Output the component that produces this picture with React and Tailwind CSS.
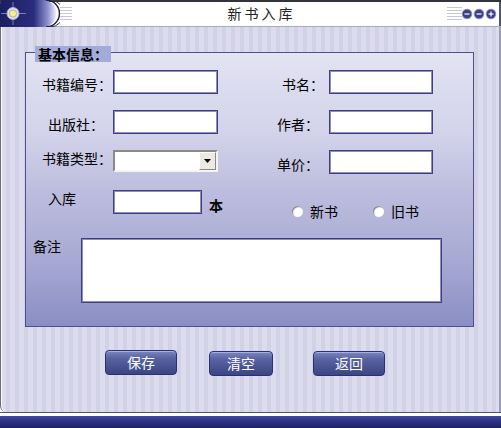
import React, { useState } from "react";

const TitleCap = () => (
  <svg width="60" height="27" viewBox="0 0 60 27" className="shrink-0">
    <defs>
      <linearGradient id="capFill" x1="0" x2="1" y1="0" y2="0">
        <stop offset="0" stopColor="#1b1e5e" />
        <stop offset="0.6" stopColor="#2a2d7e" />
        <stop offset="0.85" stopColor="#9093d2" />
        <stop offset="1" stopColor="#f3f3fc" />
      </linearGradient>
    </defs>
    <path d="M0 4 A4 4 0 0 1 4 0 H43 A13.5 13.5 0 0 1 43 27 H0 Z" fill="url(#capFill)" />
    <path d="M46 0 A13.5 13.5 0 0 1 46 27" stroke="#1f1f2e" strokeWidth="1.5" fill="none" />
    <path d="M50 0 A13.5 13.5 0 0 1 50 27" stroke="#3a3a4e" strokeWidth="1" fill="none" />
    <line x1="1" y1="13.5" x2="26" y2="13.5" stroke="#8f93d0" strokeWidth="0.8" />
    <line x1="13" y1="2" x2="13" y2="25" stroke="#8f93d0" strokeWidth="0.8" />
    <circle cx="13" cy="13.5" r="6" fill="#dfe2f6" stroke="#a8acdc" strokeWidth="1" />
    <circle cx="13" cy="13.5" r="3.6" fill="#f1ef9c" stroke="#b5aa4c" strokeWidth="0.8" />
  </svg>
);

const WinButtons = () => (
  <svg width="36" height="14" viewBox="0 0 36 14" className="shrink-0">
    {[5, 17, 29].map((cx, i) => (
      <g key={cx}>
        <circle cx={cx} cy="7" r="4.8" fill="#3b3f86" stroke="#8c90c4" strokeWidth="1" />
        <line x1={cx - 2.5} y1="7" x2={cx + 2.5} y2="7" stroke="#fff" strokeWidth="1.2" />
        {i === 2 && <line x1={cx} y1="4.5" x2={cx} y2="9.5" stroke="#fff" strokeWidth="1.2" />}
      </g>
    ))}
  </svg>
);

const TextBox = ({ w, value, onChange }) => (
  <input
    type="text"
    value={value}
    onChange={onChange}
    className={`${w} h-[24px] bg-white border border-[#3f3f80] shadow-[inset_0_0_0_1px_#8d8dc0] px-1 text-[13px] outline-none`}
  />
);

const Radio = ({ checked, onClick, label }) => (
  <button type="button" onClick={onClick} className="flex items-center">
    <span className="w-[11px] h-[11px] rounded-full bg-white shadow-[inset_1px_1px_1px_#7d7d8c] flex items-center justify-center">
      {checked && <span className="w-[5px] h-[5px] rounded-full bg-black" />}
    </span>
    <span className="ml-[7px] text-[14px] leading-[16px]">{label}</span>
  </button>
);

const GelButton = ({ w, children }) => (
  <button
    type="button"
    className={`${w} h-[25px] rounded-[4px] border border-[#2b3070] bg-[linear-gradient(180deg,#7c86c0_0%,#5a64a3_30%,#4a5492_65%,#3b4582_100%)] shadow-[inset_0_1px_0_#a9b0dc] text-white text-[14px] leading-[23px]`}
  >
    {children}
  </button>
);

export default function App() {
  const [form, setForm] = useState({
    bookNo: "",
    name: "",
    press: "",
    author: "",
    price: "",
    stock: "",
    note: "",
    isNew: null,
  });

  const set = (key) => (e) => setForm({ ...form, [key]: e.target.value });

  return (
    <div className="w-[501px] h-[428px] flex flex-col overflow-hidden bg-white text-black font-['Noto_Sans_CJK_SC','Liberation_Sans',sans-serif]">
      {/* title bar */}
      <div className="h-[27px] flex items-center bg-white shadow-[inset_0_2px_0_#34343f,inset_0_-1px_0_#a9a9bf,inset_-2px_0_0_#55556a]">
        <TitleCap />
        <div className="w-[12px] h-[13px] bg-[repeating-linear-gradient(180deg,#c6c8da_0px,#c6c8da_1px,transparent_1px,transparent_3px)]" />
        <div className="flex-1 text-center text-[14px] tracking-[3px] text-[#222] pl-[4px]">新书入库</div>
        <div className="w-[15px] h-[13px] bg-[repeating-linear-gradient(180deg,#c6c8da_0px,#c6c8da_1px,transparent_1px,transparent_3px)]" />
        <div className="mr-[3px] flex items-center">
          <WinButtons />
        </div>
      </div>

      {/* body */}
      <div className="flex-1 flex flex-col border-l border-r-2 border-l-[#6b6b86] border-r-[#9d9db4] shadow-[inset_1px_0_0_#ffffff] rounded-bl-[6px] bg-[repeating-linear-gradient(90deg,#dcdcee_0px,#dcdcee_5px,#d1d2e6_5px,#d1d2e6_9px)]">
        <div className="relative ml-[24px] mt-[25px] w-[449px] h-[275px] border border-[#4f4f8c] bg-[linear-gradient(180deg,#e3e3f3_0%,#d2d2ea_30%,#bbbcdd_52%,#a8aad4_75%,#8b8ec4_100%)]">
          <div className="absolute -top-[7px] left-[9px] h-[16px] px-[3px] bg-[#a3abd8] text-[14px] leading-[16px] font-bold">
            基本信息：
          </div>

          <div className="pt-[17px] text-[14px] leading-[16px]">
            {/* row 1 */}
            <div className="flex items-start h-[24px]">
              <span className="w-[87px] pl-[16px] mt-[6px]">书籍编号：</span>
              <TextBox w="w-[105px]" value={form.bookNo} onChange={set("bookNo")} />
              <span className="w-[111px] pl-[64px] mt-[6px]">书名：</span>
              <TextBox w="w-[104px]" value={form.name} onChange={set("name")} />
            </div>

            {/* row 2 */}
            <div className="flex items-start h-[24px] mt-[16px]">
              <span className="w-[87px] pl-[22px] mt-[6px]">出版社：</span>
              <TextBox w="w-[105px]" value={form.press} onChange={set("press")} />
              <span className="w-[111px] pl-[59px] mt-[6px]">作者：</span>
              <TextBox w="w-[104px]" value={form.author} onChange={set("author")} />
            </div>

            {/* row 3 */}
            <div className="flex items-start h-[24px] mt-[16px]">
              <span className="w-[87px] pl-[16px] mt-[0px]">书籍类型：</span>
              <div className="w-[105px] h-[22px] flex bg-white border-2 border-t-[#8a8a8a] border-l-[#8a8a8a] border-b-[#f4f4f4] border-r-[#f4f4f4]">
                <div className="flex-1" />
                <div className="w-[17px] h-full bg-[#ece9e2] border border-t-white border-l-white border-b-[#8a8a8a] border-r-[#8a8a8a] flex items-center justify-center">
                  <svg width="7" height="4" viewBox="0 0 7 4">
                    <path d="M0 0 H7 L3.5 4 Z" fill="#000" />
                  </svg>
                </div>
              </div>
              <span className="w-[111px] pl-[59px] mt-[6px]">单价：</span>
              <TextBox w="w-[104px]" value={form.price} onChange={set("price")} />
            </div>

            {/* row 4 */}
            <div className="flex items-start h-[24px] mt-[16px]">
              <span className="w-[87px] pl-[22px] mt-[0px]">入库</span>
              <TextBox w="w-[89px]" value={form.stock} onChange={set("stock")} />
              <span className="ml-[7px] mt-[7px] font-bold">本</span>
              <div className="ml-[69px] mt-[13px] flex items-center">
                <Radio
                  label="新书"
                  checked={form.isNew === true}
                  onClick={() => setForm({ ...form, isNew: true })}
                />
                <div className="ml-[35px]">
                  <Radio
                    label="旧书"
                    checked={form.isNew === false}
                    onClick={() => setForm({ ...form, isNew: false })}
                  />
                </div>
              </div>
            </div>

            {/* note */}
            <div className="flex items-start mt-[24px]">
              <span className="w-[55px] pl-[7px] mt-[0px]">备注</span>
              <textarea
                value={form.note}
                onChange={set("note")}
                className="w-[361px] h-[65px] bg-white border border-[#3f3f80] shadow-[inset_0_0_0_1px_#8d8dc0] resize-none outline-none p-1 text-[13px]"
              />
            </div>
          </div>
        </div>

        <div className="flex ml-[104px] mt-[23px]">
          <GelButton w="w-[72px]">保存</GelButton>
          <div className="ml-[32px]">
            <GelButton w="w-[64px]">清空</GelButton>
          </div>
          <div className="ml-[40px]">
            <GelButton w="w-[72px]">返回</GelButton>
          </div>
        </div>
      </div>

      {/* bottom edge */}
      <div className="h-px bg-[#55556a]" />
      <div className="h-[3px] bg-white" />
      <div className="h-[12px] bg-[linear-gradient(180deg,#434a9c_0%,#30358a_35%,#1e2160_100%)]" />
    </div>
  );
}
